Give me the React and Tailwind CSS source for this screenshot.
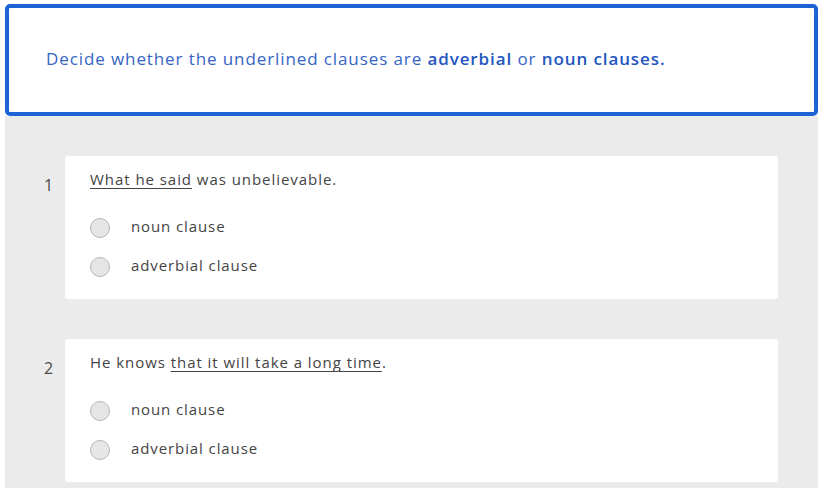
export default function App() {
  const questions = [
    {
      n: 1,
      text: (
        <>
          <span className="underline underline-offset-[3px] decoration-1">What he said</span> was unbelievable.
        </>
      ),
    },
    {
      n: 2,
      text: (
        <>
          He knows <span className="underline underline-offset-[3px] decoration-1">that it will take a long time</span>.
        </>
      ),
    },
  ];
  return (
    <div className="w-[831px] h-[488px] bg-white pl-[5px] pt-[4px] overflow-hidden" style={{ fontFamily: '"Open Sans", sans-serif' }}>
      <div className="w-[813px] h-[112px] border-[4px] border-[#1e63d6] rounded-[5px] bg-white flex items-center pl-[37px] pb-[2px]">
        <p className="text-[17px] text-[#3564c4] tracking-[0.9px]">
          Decide whether the underlined clauses are <b className="font-semibold text-[#2356bf]">adverbial</b> or{' '}
          <b className="font-semibold text-[#2356bf]">noun clauses.</b>
        </p>
      </div>
      <div className="w-[813px] h-[372px] bg-[#ebebeb] pt-[40px] flex flex-col gap-[40px]">
        {questions.map((q) => (
          <div key={q.n} className="flex">
            <div className="w-[60px] pl-[39px] pt-[17px] text-[16px] text-[#4a4a4a]">{q.n}</div>
            <div className="w-[713px] h-[143px] bg-white rounded-[3px] pl-[25px] pt-[12px]">
              <p className="text-[15px] text-[#444] h-[22px] leading-[22px] tracking-[0.95px]">{q.text}</p>
              <div className="mt-[28px] flex flex-col gap-[19px]">
                {['noun clause', 'adverbial clause'].map((o) => (
                  <div key={o} className="flex items-center h-[20px]">
                    <span className="w-[20px] h-[20px] rounded-full border border-[#b5b5b5] bg-[#e6e6e6]" />
                    <span className="ml-[21px] text-[15px] text-[#444] -mt-[4px] tracking-[0.9px]">{o}</span>
                  </div>
                ))}
              </div>
            </div>
          </div>
        ))}
      </div>
    </div>
  );
}
